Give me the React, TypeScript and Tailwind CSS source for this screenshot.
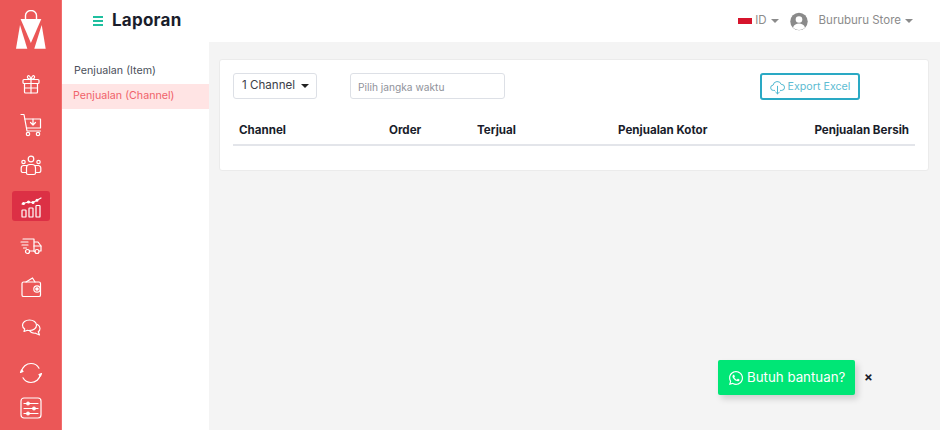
import { FaWhatsapp } from 'react-icons/fa';

function Logo() {
  return (
    <svg width="30" height="39" viewBox="0 0 30 39" fill="none">
      <path d="M9.500 9V5.500a5.500 5 0 0 1 11 0V9" stroke="#fff" strokeWidth="1.400" />
      <path d="M4.600 9h20.700L14.900 33z" fill="#fff" />
      <path d="M4 15 0 38.700h11.300z" fill="#fff" />
      <path d="M25.700 15l4 23.700H18.300z" fill="#fff" />
    </svg>
  );
}

const iconProps = {
  width: 24,
  height: 24,
  viewBox: '0 0 24 24',
  fill: 'none',
  stroke: '#fff',
  strokeWidth: 1.2,
  strokeLinecap: 'round' as const,
  strokeLinejoin: 'round' as const,
};

function GiftIcon() {
  return (
    <svg {...iconProps}>
      <rect x="4" y="7.500" width="16" height="4" rx="1" />
      <rect x="5.500" y="11.500" width="13" height="9.500" rx="1" />
      <path d="M12 7.500V21M5.500 16h13" />
      <path d="M12 7.500C9.500 7.500 8 6 8.500 4.500S11 3 12 7.500zM12 7.500c2.500 0 4-1.500 3.500-3S13 3 12 7.500z" />
    </svg>
  );
}

function CartIcon() {
  return (
    <svg {...iconProps}>
      <path d="M2 1.500h3l3 16.500h13.500" />
      <path d="M5.800 6h15.700v9H7.500" />
      <path d="M14 6v6M11.500 9.500 14 12l2.500-2.500" />
      <circle cx="9" cy="21" r="1.700" />
      <circle cx="19" cy="21" r="1.700" />
    </svg>
  );
}

function UsersIcon() {
  return (
    <svg {...iconProps}>
      <circle cx="12" cy="6" r="2.800" />
      <circle cx="4.500" cy="9" r="1.700" />
      <circle cx="19.500" cy="9" r="1.700" />
      <path d="M7.500 20v-5a3.500 3.500 0 0 1 3.500-3.500h2a3.500 3.500 0 0 1 3.500 3.500v5a1.500 1.500 0 0 1-1.500 1.500H9A1.500 1.500 0 0 1 7.500 20z" />
      <path d="M7.500 19.500H4A1.800 1.800 0 0 1 2.200 17.700V15A2.500 2.500 0 0 1 4.700 12.500h3M16.500 19.500H20a1.800 1.800 0 0 0 1.800-1.800V15a2.500 2.500 0 0 0-2.500-2.500h-3" />
    </svg>
  );
}

function ChartIcon() {
  return (
    <svg {...iconProps}>
      <path d="M3 10l6-2 5 .5 8-4.500" />
      <circle cx="4.500" cy="9.500" r="0.900" fill="#fff" />
      <circle cx="9.500" cy="8" r="0.900" fill="#fff" />
      <circle cx="14" cy="8.500" r="0.900" fill="#fff" />
      <circle cx="18" cy="6.200" r="0.900" fill="#fff" />
      <rect x="3" y="16" width="4" height="7" rx="0.600" />
      <rect x="10" y="14" width="4" height="9" rx="0.600" />
      <rect x="17" y="11.500" width="4" height="11.500" rx="0.600" />
    </svg>
  );
}

function TruckIcon() {
  return (
    <svg {...iconProps}>
      <path d="M4 5h11v12h-4.500M15 8h4l3 4v5h-1.500" />
      <path d="M15 12h7" />
      <circle cx="8.500" cy="17.500" r="2" />
      <circle cx="18" cy="17.500" r="2" />
      <path d="M15 17.500h1M2 8h7M3 11h6M4.500 14h3" />
    </svg>
  );
}

function WalletIcon() {
  return (
    <svg {...iconProps}>
      <rect x="3" y="7" width="18.500" height="14.500" rx="1.600" />
      <path d="M7 7l6.500-4L16 7" />
      <circle cx="18" cy="14" r="3.200" />
      <circle cx="18" cy="14" r="1.200" fill="#fff" />
    </svg>
  );
}

function ChatIcon() {
  return (
    <svg {...iconProps}>
      <path d="M10.500 4C6.500 4 3.500 6.200 3.500 9.200c0 1.500.8 2.800 2.200 3.700L5 15.500l3.500-1.200c.6.100 1.300.200 2 .200 4 0 7-2.200 7-5.200S14.500 4 10.500 4z" />
      <path d="M18.500 8.500c1.500.9 2.500 2.300 2.500 3.900 0 1.300-.6 2.400-1.700 3.300l1.200 3.300-4-1.800c-2.700.2-5-.8-6-2.700" />
    </svg>
  );
}

function SyncIcon() {
  return (
    <svg {...iconProps}>
      <path d="M2.500 10.500C3.500 6 7.200 2.500 12 2.500c3.500 0 6.500 1.900 8 4.700" />
      <path d="M21.500 13.500c-1 4.500-4.700 8-9.500 8-3.500 0-6.500-1.900-8-4.700" />
      <path d="M1.500 11.500l2.500-1-1.500-1.500z" fill="#fff" />
      <path d="M22.500 12.500l-2.500 1 1.500 1.500z" fill="#fff" />
    </svg>
  );
}

function SettingsIcon() {
  return (
    <svg {...iconProps}>
      <rect x="2" y="2" width="20" height="20" rx="3" />
      <path d="M5 7.500h14M5 12.500h14M5 17.500h14" />
      <circle cx="9" cy="7.500" r="1.300" />
      <circle cx="15" cy="12.500" r="1.300" />
      <circle cx="9" cy="17.500" r="1.300" />
    </svg>
  );
}

function CloudIcon() {
  return (
    <svg width="15" height="15" viewBox="0 0 18 18" fill="none" stroke="#4fb8d0" strokeWidth="1.200" strokeLinecap="round" strokeLinejoin="round">
      <path d="M5.500 12.500H4.200A3.200 3.200 0 0 1 3.800 6.100 5 5 0 0 1 13.500 5.300a3.600 3.600 0 0 1 .7 7.200h-1.700" />
      <path d="M9 7.500v9M6.800 14.500 9 16.700l2.200-2.200" />
    </svg>
  );
}

function Caret() {
  return <span className="block w-0 h-0 border-x-[4px] border-x-transparent border-t-[4px] border-t-current" />;
}

function NavIcon({ children, active }: { children: React.ReactNode; active?: boolean }) {
  return (
    <div className={active ? 'w-[38px] h-[30px] rounded-[3px] bg-[#dc3045] flex items-center justify-center' : 'w-[38px] h-[30px] flex items-center justify-center'}>
      {children}
    </div>
  );
}

export default function App() {
  return (
    <div className="flex h-screen overflow-hidden bg-[#f4f4f4] font-['Inter','Liberation_Sans',sans-serif] relative">
      <aside className="w-[62px] shrink-0 bg-[#eb5757] border-r border-[#f26c6c] flex flex-col items-center">
        <div className="h-[49px] pt-[10px] mb-[20px]">
          <Logo />
        </div>
        <div className="flex flex-col items-center gap-[10.6px]">
          <NavIcon><GiftIcon /></NavIcon>
          <NavIcon><CartIcon /></NavIcon>
          <NavIcon><UsersIcon /></NavIcon>
          <NavIcon active><ChartIcon /></NavIcon>
          <NavIcon><TruckIcon /></NavIcon>
          <NavIcon><WalletIcon /></NavIcon>
          <NavIcon><ChatIcon /></NavIcon>
        </div>
        <div className="mt-[15.4px] flex flex-col items-center gap-[5px]">
          <NavIcon><SyncIcon /></NavIcon>
          <NavIcon><SettingsIcon /></NavIcon>
        </div>
      </aside>

      <div className="flex-1 flex flex-col min-w-0">
        <header className="h-[42px] shrink-0 bg-white flex items-center pl-[31px] pr-[27px] z-10">
          <div className="flex flex-col gap-[2px] w-[10px]">
            <span className="h-[2px] bg-[#1fbf9f]" />
            <span className="h-[2px] bg-[#1fbf9f]" />
            <span className="h-[2px] bg-[#1fbf9f]" />
          </div>
          <h1 className="ml-[9px] text-[17px] font-bold text-[#1a1d2b] tracking-[0.25px]">Laporan</h1>
          <div className="ml-auto flex items-center text-[#8b8b8b] text-[11.5px]">
            <div className="w-[14px] h-[6px] bg-[#d6142c] mr-[3px]" />
            <span>ID</span>
            <span className="ml-[4px]"><Caret /></span>
            <svg className="ml-[11px]" width="18" height="19" viewBox="0 0 18 19">
              <circle cx="9" cy="9.500" r="8.700" fill="#8a8a8a" />
              <circle cx="9" cy="7.500" r="3.300" fill="#fff" />
              <path d="M3 15.500c1-3 3.500-4 6-4s5 1 6 4c-1.500 1.500-3.500 2.500-6 2.500s-4.500-1-6-2.500z" fill="#fff" />
            </svg>
            <span className="ml-[11px]">Buruburu Store</span>
            <span className="ml-[4px]"><Caret /></span>
          </div>
        </header>

        <div className="flex-1 flex min-h-0">
          <nav className="w-[147px] shrink-0 bg-white pt-[16px] text-[10.7px]">
            <div className="h-[26px] flex items-center pl-[12px] text-[#4a4f5a]">Penjualan (Item)</div>
            <div className="h-[25px] flex items-center pl-[11px] bg-[#ffe4e4] text-[#f0626a]">Penjualan (Channel)</div>
          </nav>

          <main className="flex-1 min-w-0 pt-[17px] pl-[10px] pr-[11px]">
            <section className="h-[112px] bg-white rounded-[3px] border border-[#ebebeb] px-[13px] pt-[13px]">
              <div className="flex items-start">
                <button className="h-[26px] w-[84px] rounded-[3px] border border-[#dde0e6] flex items-center pl-[8px] gap-[6px] text-[11.6px] text-[#3c4048]">
                  1 Channel
                  <span className="text-[#222]"><Caret /></span>
                </button>
                <input
                  placeholder="Pilih jangka waktu"
                  className="ml-[33px] h-[26px] w-[155px] rounded-[3px] border border-[#dde0e6] pl-[7px] pr-[7px] pt-[1px] text-[10.2px] placeholder:text-[#8f929a] outline-none"
                />
                <button className="ml-[255px] h-[27px] w-[100px] rounded-[3px] border-2 border-[#2aa9c4] flex items-center justify-center gap-[3px] pt-[1px] text-[10.7px] text-[#5dbcd2]">
                  <CloudIcon />
                  Export Excel
                </button>
              </div>
              <div className="mt-[17px] h-[29px] grid grid-cols-[150px_88px_141px_1fr_auto] items-center border-b-2 border-[#e3e5ea] pl-[6px] pr-[6px] text-[11.6px] font-bold text-[#1a1d2b]">
                <div>Channel</div>
                <div>Order</div>
                <div>Terjual</div>
                <div>Penjualan Kotor</div>
                <div>Penjualan Bersih</div>
              </div>
            </section>
          </main>
        </div>
      </div>

      <div className="absolute left-[718px] top-[360px] flex items-center">
        <button className="h-[35px] w-[137px] rounded-[2px] bg-[#00e676] text-white flex items-center pl-[10px] gap-[3px] text-[13.3px] shadow-[3px_4px_6px_rgba(0,0,0,0.15)]">
          <FaWhatsapp className="text-[16px]" />
          Butuh bantuan?
        </button>
        <span className="ml-[9px] text-[13px] font-bold leading-none text-[#1a1d2b]">×</span>
      </div>
    </div>
  );
}
